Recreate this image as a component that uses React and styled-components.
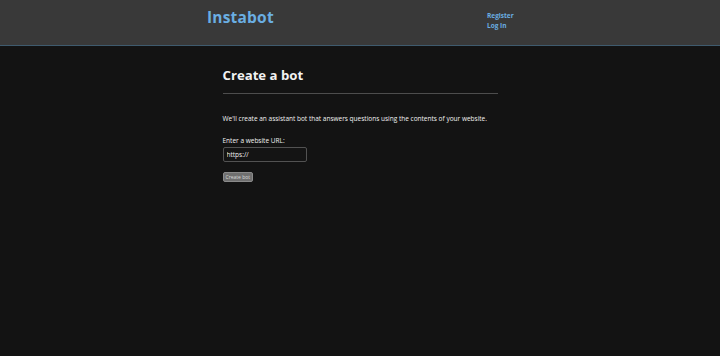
import React from 'react'
import styled, { createGlobalStyle } from 'styled-components'

const Global = createGlobalStyle`
    html, body {
        margin: 0;
        background: #131313;
        font-family: "Open Sans", "Noto Sans", sans-serif;
        color: #f2f2f2;
    }
`;

const Header = styled.header`
    height: 46px;
    background-color: #393939;
    border-bottom: 1px solid #3f5b6e;
    box-sizing: border-box;
`;

const HeaderInner = styled.div`
    width: 306px;
    margin: 0 auto;
    display: flex;
    justify-content: space-between;
    align-items: flex-start;
`;

const Brand = styled.a`
    font-size: 15.5px;
    font-weight: 700;
    color: #6aaee2;
    text-decoration: none;
    margin-top: 6px;
    line-height: 22px;
    letter-spacing: 0.2px;
`;

const Nav = styled.nav`
    display: flex;
    flex-direction: column;
    margin-top: 11px;
    width: 26px;

    & a {
        font-size: 6.5px;
        font-weight: 700;
        color: #6aaee2;
        text-decoration: none;
        line-height: 10px;
    }
`;

const Main = styled.main`
    width: 275px;
    margin: 0 auto;
    padding-top: 19px;
`;

const Title = styled.h1`
    font-size: 13.2px;
    font-weight: 700;
    margin: 0;
    line-height: 20px;
    padding-bottom: 8px;
    border-bottom: 1px solid #4d4d4d;
`;

const Text = styled.p`
    font-size: 6.5px;
    margin: 20px 0 13px;
    line-height: 9px;
`;

const Label = styled.label`
    display: block;
    font-size: 6.5px;
    line-height: 9px;
    margin-bottom: 2px;
`;

const Input = styled.input`
    display: block;
    box-sizing: border-box;
    width: 84px;
    height: 15px;
    background: #141414;
    border: 1px solid #525252;
    border-radius: 2px;
    color: #f0f0f0;
    font-family: inherit;
    font-size: 6.5px;
    padding: 0 3px;
    outline: none;
`;

const Button = styled.button`
    display: block;
    margin-top: 10px;
    height: 10px;
    padding: 0 2px;
    background: #6f6f6f;
    border: 1px solid #8a8a8a;
    border-radius: 2px;
    color: #d8d8d8;
    font-family: inherit;
    font-size: 5px;
    line-height: 8px;
`;

export default function App() {
    return (
        <>
            <Global />
            <Header>
                <HeaderInner>
                    <Brand href="#">Instabot</Brand>
                    <Nav>
                        <a href="#">Register</a>
                        <a href="#">Log In</a>
                    </Nav>
                </HeaderInner>
            </Header>
            <Main>
                <Title>Create a bot</Title>
                <Text>We'll create an assistant bot that answers questions using the contents of your website.</Text>
                <Label>Enter a website URL:</Label>
                <Input defaultValue="https://" />
                <Button>Create bot</Button>
            </Main>
        </>
    )
}
